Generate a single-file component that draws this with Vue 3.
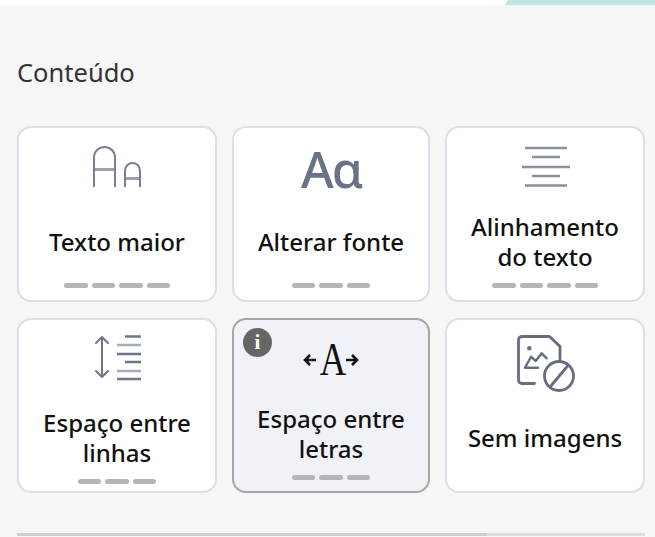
<template>
  <div class="page">
    <div class="top-strip"><div class="top-accent"></div></div>
    <h2 class="title">Conteúdo</h2>

    <div class="grid">
      <div v-for="item in items" :key="item.label" class="card" :class="{ active: item.active, tall: item.tall }">
        <span v-if="item.active" class="info">i</span>

        <div class="icon">
          <div v-if="item.icon === 'bigger'" class="ic-bigger">
            <span class="arch big"></span>
            <span class="arch small"></span>
          </div>

          <div v-else-if="item.icon === 'font'" class="ic-font">Aɑ</div>

          <svg v-else-if="item.icon === 'align'" class="ic-svg" width="80" height="50" viewBox="0 0 80 50">
            <g stroke="#8b90a2" stroke-width="2.4" fill="none">
              <path d="M20 5h42M27 14h28M17 24h48M27 33h28M20 42.500h42" />
            </g>
          </svg>

          <svg v-else-if="item.icon === 'line'" class="ic-svg" width="80" height="50" viewBox="0 0 80 50">
            <g fill="none" stroke="#6f7689" stroke-width="2" stroke-linecap="round" stroke-linejoin="round">
              <path d="M25 2v40M19 8l6-6 6 6M19 36l6 6 6-6" />
            </g>
            <g fill="none" stroke-width="2.500">
              <path stroke="#6f7689" d="M48 1.500h16M40 19h24M48 27h16M40 44h24" />
              <path stroke="#a9adba" d="M40 10h24M40 36h24" />
            </g>
          </svg>

          <div v-else-if="item.icon === 'letter'" class="ic-letter">
            <svg width="14" height="14" viewBox="0 0 14 14">
              <path d="M13 7H2M7 2 2 7l5 5" fill="none" stroke="#111" stroke-width="2.600" />
            </svg>
            <span class="serif-a">A</span>
            <svg width="14" height="14" viewBox="0 0 14 14">
              <path d="M1 7h11M7 2l5 5-5 5" fill="none" stroke="#111" stroke-width="2.600" />
            </svg>
          </div>

          <svg v-else class="ic-svg" width="80" height="62" viewBox="0 0 80 62">
            <g fill="none" stroke="#666d80" stroke-linecap="round" stroke-linejoin="round">
              <path stroke-width="2.800" d="M29.500 48.500H17a3.500 3.500 0 0 1-3.500-3.500V5A3.500 3.500 0 0 1 17 1.500h27.500l10.500 10V24" />
              <path stroke-width="2.400" d="M20 32.700l6-11 4.700 4.300 6-7.700 5 5M20 32.700h13" />
              <circle cx="54" cy="41" r="14.500" stroke-width="2.800" />
              <path stroke-width="2.800" d="M45 52l18-21.500" />
            </g>
            <circle cx="24.300" cy="13.300" r="2.200" fill="#666d80" />
          </svg>
        </div>

        <div class="label">{{ item.label }}</div>

        <div v-if="item.dashes" class="dashes">
          <span v-for="n in item.dashes" :key="n"></span>
        </div>
      </div>
    </div>

    <div class="rule"><span class="rule-light"></span></div>
  </div>
</template>

<script setup>
const items = [
  { label: 'Texto maior', icon: 'bigger', dashes: 4 },
  { label: 'Alterar fonte', icon: 'font', dashes: 3 },
  { label: 'Alinhamento do texto', icon: 'align', dashes: 4 },
  { label: 'Espaço entre linhas', icon: 'line', dashes: 3, tall: true },
  { label: 'Espaço entre letras', icon: 'letter', dashes: 3, active: true },
  { label: 'Sem imagens', icon: 'noimg', tall: true }
]
</script>

<style>
html, body {
  margin: 0;
  background: #f6f6f6;
}
</style>

<style scoped>
.page {
  width: 655px;
  height: 537px;
  overflow: hidden;
  background: #f6f6f6;
  font-family: "Noto Sans", "Open Sans", sans-serif;
  display: flex;
  flex-direction: column;
}

.top-strip {
  height: 5px;
  flex: none;
  background: #fff;
  display: flex;
  justify-content: flex-end;
}
.top-accent {
  width: 150px;
  background: #bde8e2;
  clip-path: polygon(3px 0, 100% 0, 100% 100%, 0 100%);
}

.title {
  margin: 0;
  padding: 50px 0 0 17px;
  height: 71px;
  box-sizing: border-box;
  font-size: 25.5px;
  line-height: 34px;
  font-weight: 400;
  color: #333;
  flex: none;
}

.grid {
  margin: 50px 10px 0 17px;
  display: grid;
  grid-template-columns: 200px 198px 200px;
  grid-template-rows: 176px 175px;
  column-gap: 15px;
  row-gap: 16px;
  flex: none;
}

.card {
  position: relative;
  box-sizing: border-box;
  padding-top: 15px;
  border: 2px solid #dddee7;
  border-radius: 14px;
  background: #fff;
  display: flex;
  flex-direction: column;
  align-items: center;
}
.card.active {
  background: #f1f2f7;
  border-color: #a6a6a6;
}

.icon {
  height: 69px;
  width: 100%;
  display: flex;
  justify-content: center;
  align-items: flex-start;
  flex: none;
}
.card.tall .icon {
  height: 73px;
}
.ic-svg {
  display: block;
}

/* rounded "Aa" made of two arches */
.ic-bigger {
  display: flex;
  align-items: flex-end;
  gap: 8px;
  margin-top: 3px;
}
.arch {
  display: block;
  position: relative;
  box-sizing: border-box;
  border: 2.500px solid #7a8094;
  border-bottom: 0;
}
.arch::after {
  content: "";
  position: absolute;
  left: 0;
  right: 0;
  height: 2.500px;
  background: #9a9fae;
}
.arch.big {
  width: 23px;
  height: 41px;
  border-radius: 11.500px 11.500px 0 0;
}
.arch.big::after {
  top: 20px;
}
.arch.small {
  width: 17px;
  height: 25px;
  border-radius: 8.500px 8.500px 0 0;
}
.arch.small::after {
  top: 13px;
}

.ic-font {
  font-family: "Noto Sans", sans-serif;
  font-size: 50px;
  line-height: 52px;
  font-weight: 500;
  color: #6b7287;
  letter-spacing: -2px;
}

.ic-letter {
  display: flex;
  align-items: center;
  height: 50px;
}
.serif-a {
  font-family: "Liberation Serif", serif;
  font-size: 46px;
  line-height: 50px;
  width: 28px;
  color: #111;
  text-align: center;
  transform: scaleX(0.8);
}

.info {
  position: absolute;
  left: 9px;
  top: 8px;
  width: 29px;
  height: 29px;
  border-radius: 50%;
  background: #666;
  color: #fff;
  font-family: "Liberation Serif", serif;
  font-weight: 700;
  font-size: 21px;
  line-height: 29px;
  text-align: center;
}

.label {
  height: 60px;
  padding: 0 14px;
  box-sizing: border-box;
  display: flex;
  align-items: center;
  justify-content: center;
  text-align: center;
  font-size: 24px;
  line-height: 30px;
  font-weight: 500;
  color: #111;
  flex: none;
}

.dashes {
  display: flex;
  gap: 4px;
  margin-top: 11px;
}
.dashes span {
  display: block;
  width: 23.500px;
  height: 5px;
  border-radius: 3px;
  background: #b5b5b5;
}

.rule {
  margin: 40px 10px 0 17px;
  height: 3px;
  background: #cfcfcf;
  display: flex;
  justify-content: flex-end;
  flex: none;
}
.rule-light {
  width: 158px;
  background: #dedede;
}
</style>
